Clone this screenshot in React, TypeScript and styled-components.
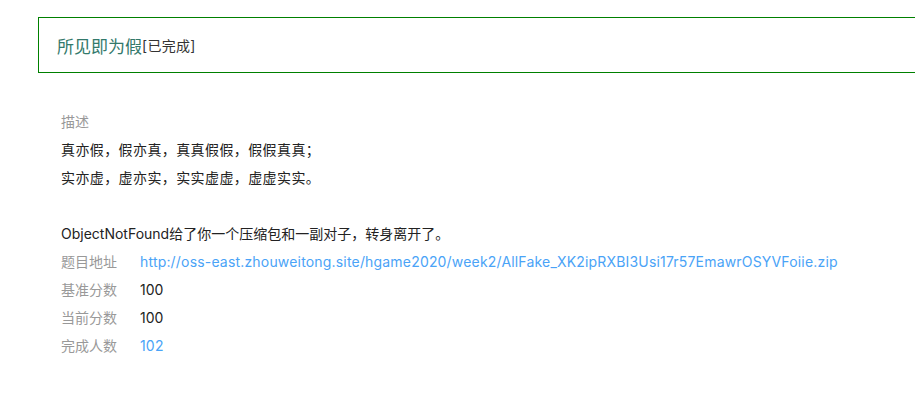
import React from "react";
import styled, { createGlobalStyle } from "styled-components";

const Global = createGlobalStyle`
  html, body { margin: 0; padding: 0; background: #fff; overflow: hidden; }
  body { font-family: Inter, "Noto Sans CJK SC", sans-serif; }
`;

const Page = styled.div`
  width: 915px;
  height: 406px;
  overflow: hidden;
  padding: 17px 0 0 38px;
  box-sizing: border-box;
  font-family: Inter, "Noto Sans CJK SC", sans-serif;
  font-size: 14px;
`;

const Header = styled.div`
  width: 900px;
  height: 56px;
  box-sizing: border-box;
  border: 1px solid #008000;
  display: flex;
  align-items: center;
  padding-left: 18px;
`;

const Title = styled.span`
  color: #33796b;
  font-size: 17px;
`;

const Status = styled.span`
  color: #333;
  font-size: 14px;
  letter-spacing: 0.3px;
`;

const Body = styled.div`
  padding: 35px 0 0 23px;
  display: flex;
  flex-direction: column;
`;

const Label = styled.div`
  color: #999;
  line-height: 28px;
`;

const DescLine = styled.div`
  color: #222;
  line-height: 28px;
  letter-spacing: 0.4px;
`;

const Story = styled.div`
  color: #222;
  line-height: 28px;
  margin-top: 28px;
`;

const Row = styled.div`
  display: flex;
  line-height: 28px;
`;

const RowLabel = styled.span`
  width: 79px;
  color: #999;
`;

const RowValue = styled.span<{ $link?: boolean }>`
  color: ${(p) => (p.$link ? "#4aa3f7" : "#222")};
  letter-spacing: ${(p) => (p.$link ? "0.18px" : "0")};
`;

export default function App() {
  return (
    <Page>
      <Global />
      <Header>
        <Title>所见即为假</Title>
        <Status>[已完成]</Status>
      </Header>
      <Body>
        <Label>描述</Label>
        <DescLine>真亦假，假亦真，真真假假，假假真真；</DescLine>
        <DescLine>实亦虚，虚亦实，实实虚虚，虚虚实实。</DescLine>
        <Story>ObjectNotFound给了你一个压缩包和一副对子，转身离开了。</Story>
        <Row>
          <RowLabel>题目地址</RowLabel>
          <RowValue $link>
            http://oss-east.zhouweitong.site/hgame2020/week2/AllFake_XK2ipRXBI3Usi17r57EmawrOSYVFoiie.zip
          </RowValue>
        </Row>
        <Row>
          <RowLabel>基准分数</RowLabel>
          <RowValue>100</RowValue>
        </Row>
        <Row>
          <RowLabel>当前分数</RowLabel>
          <RowValue>100</RowValue>
        </Row>
        <Row>
          <RowLabel>完成人数</RowLabel>
          <RowValue $link>102</RowValue>
        </Row>
      </Body>
    </Page>
  );
}
